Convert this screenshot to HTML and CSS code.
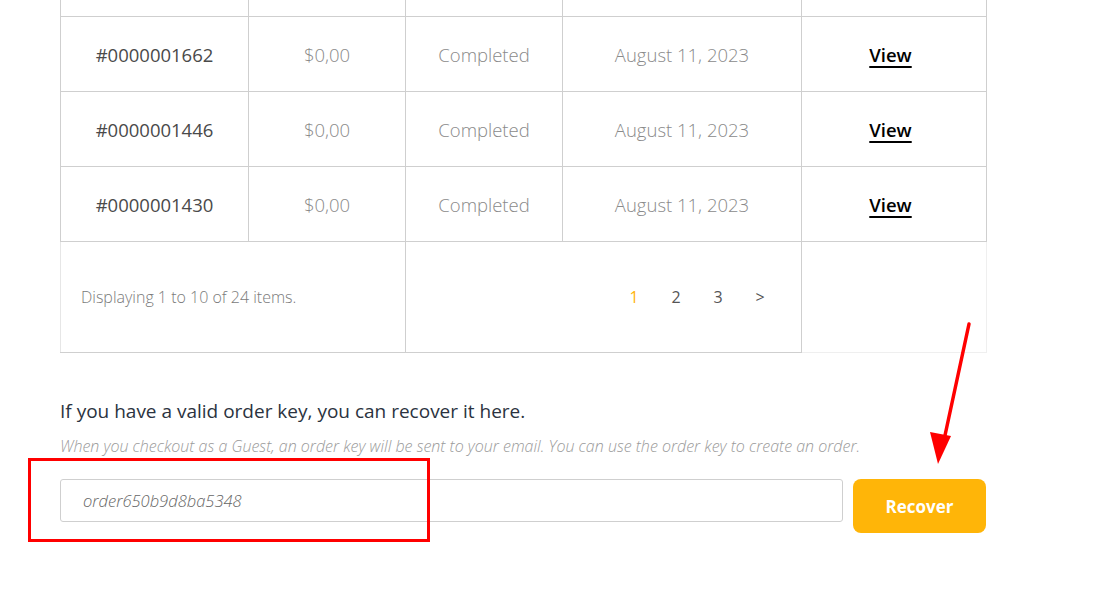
FILE: index.html
```html
<!doctype html>
<html lang="en">
  <head>
    <meta charset="utf-8">
    <title>My Orders</title>
    <link rel="stylesheet" href="styles.css">
  </head>
  <body>
    <div class="page">
      <table class="orders">
        <colgroup>
          <col class="c-id"><col class="c-total"><col class="c-status"><col class="c-date"><col class="c-action">
        </colgroup>
        <tr class="cut-row">
          <td></td><td></td><td></td><td></td><td></td>
        </tr>
        <tr>
          <td class="order-id">#0000001662</td>
          <td class="muted">$0,00</td>
          <td class="muted">Completed</td>
          <td class="muted">August 11, 2023</td>
          <td class="action"><a class="view" href="#">View</a></td>
        </tr>
        <tr>
          <td class="order-id">#0000001446</td>
          <td class="muted">$0,00</td>
          <td class="muted">Completed</td>
          <td class="muted">August 11, 2023</td>
          <td class="action"><a class="view" href="#">View</a></td>
        </tr>
        <tr>
          <td class="order-id">#0000001430</td>
          <td class="muted">$0,00</td>
          <td class="muted">Completed</td>
          <td class="muted">August 11, 2023</td>
          <td class="action"><a class="view" href="#">View</a></td>
        </tr>
        <tr class="foot-row">
          <td colspan="2" class="summary">Displaying 1 to 10 of 24 items.</td>
          <td colspan="2">
            <div class="pager">
              <a class="current" href="#">1</a>
              <a href="#">2</a>
              <a href="#">3</a>
              <a href="#">&gt;</a>
            </div>
          </td>
          <td class="blank"></td>
        </tr>
      </table>

      <div class="recover">
        <h3>If you have a valid order key, you can recover it here.</h3>
        <p class="hint">When you checkout as a Guest, an order key will be sent to your email. You can use the order key to create an order.</p>
        <form class="recover-form" onsubmit="return false">
          <input type="text" value="order650b9d8ba5348">
          <button type="submit">Recover</button>
        </form>
      </div>
    </div>

    <!-- screenshot annotations -->
    <div class="mark-box"></div>
    <svg class="mark-arrow" width="60" height="160" viewBox="0 0 60 160">
      <line x1="48" y1="4" x2="23" y2="120" stroke="#ff0000" stroke-width="3.5" stroke-linecap="round"/>
      <polygon points="9,112 30,116 17,144" fill="#ff0000"/>
    </svg>
  </body>
</html>
```

FILE: styles.css
```css
body {
  margin: 0;
  background: #fff;
  font-family: "Open Sans", "Noto Sans", sans-serif;
  color: #444;
}

.page {
  padding-left: 60px;
  width: 926px;
}

.orders {
  width: 926px;
  border-collapse: collapse;
  table-layout: fixed;
}

.c-id { width: 188px; }
.c-total { width: 157px; }
.c-status { width: 157px; }
.c-date { width: 239px; }
.c-action { width: 185px; }

.orders td {
  border: 1px solid #cfcfcf;
  height: 74px;
  padding: 0;
  text-align: center;
  font-size: 18.5px;
}

.orders .cut-row td {
  height: 16px;
  border-top: 0;
}

.order-id {
  color: #4a4a4a;
}

.muted {
  color: #8a8a8a;
  font-weight: 300;
}

.orders .action {
  padding-right: 7px;
}

.view {
  color: #000;
  font-weight: 600;
  text-decoration: underline;
  text-decoration-thickness: 2px;
  text-underline-offset: 4px;
}

.orders .foot-row td {
  height: 110px;
}

.orders .summary {
  text-align: left;
  padding-left: 20px;
  font-size: 16px;
  color: #7a7a7a;
  font-weight: 300;
  border-left-color: #e6e6e6;
}

.pager {
  display: flex;
  justify-content: flex-end;
  gap: 30px;
  padding-right: 35px;
}

.pager a {
  font-size: 16px;
  color: #555;
  text-decoration: none;
  width: 12px;
  text-align: center;
}

.pager a.current {
  color: #ffb508;
}

.orders .blank {
  border-color: #efefef;
  border-left-color: #cfcfcf;
  border-top-color: #cfcfcf;
}

.recover {
  padding-top: 45px;
}

.recover h3 {
  margin: 0;
  font-size: 19px;
  font-weight: 400;
  color: #2b3340;
}

.hint {
  margin: 11px 0 0;
  font-size: 16px;
  font-style: italic;
  color: #9a9a9a;
  font-weight: 300;
}

.recover-form {
  display: flex;
  align-items: flex-start;
  gap: 10px;
  margin-top: 22px;
}

.recover-form input {
  box-sizing: border-box;
  width: 783px;
  height: 43px;
  border: 1px solid #cfcfcf;
  border-radius: 3px;
  padding: 0 22px;
  font-family: inherit;
  font-size: 16.5px;
  font-style: italic;
  font-weight: 300;
  color: #666;
  outline: none;
}

.recover-form button {
  width: 133px;
  height: 54px;
  border: 0;
  border-radius: 8px;
  background: #ffb508;
  color: #fff;
  font-family: inherit;
  font-size: 17px;
  font-weight: 700;
  cursor: pointer;
}

.mark-box {
  position: absolute;
  left: 28px;
  top: 458px;
  width: 396px;
  height: 78px;
  border: 3px solid #ff0000;
}

.mark-arrow {
  position: absolute;
  left: 921px;
  top: 320px;
}
```
